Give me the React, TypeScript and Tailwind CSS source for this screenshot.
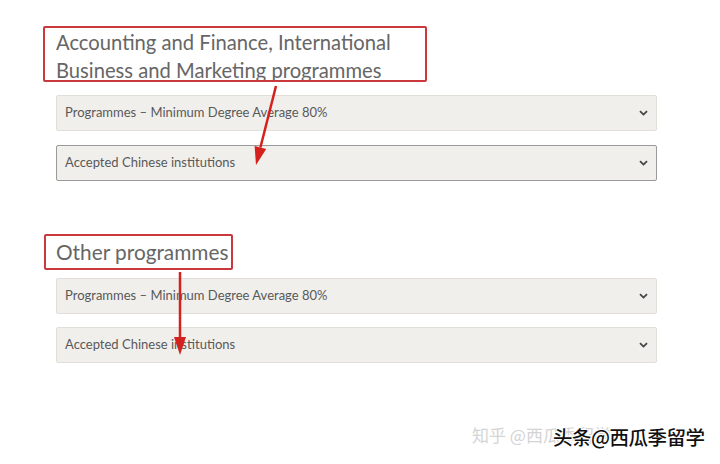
import React from "react";

type Section = {
  title: string[];
  arrow: { x1: number; y1: number; x2: number; y2: number };
  rows: { label: string; active?: boolean }[];
};

const sections: Section[] = [
  {
    title: ["Accounting and Finance, International", "Business and Marketing programmes"],
    arrow: { x1: 276, y1: 86, x2: 256, y2: 165 },
    rows: [
      { label: "Programmes – Minimum Degree Average 80%" },
      { label: "Accepted Chinese institutions", active: true },
    ],
  },
  {
    title: ["Other programmes"],
    arrow: { x1: 180, y1: 272, x2: 180, y2: 355 },
    rows: [
      { label: "Programmes – Minimum Degree Average 80%" },
      { label: "Accepted Chinese institutions" },
    ],
  },
];

function Chevron() {
  return (
    <svg width="9" height="6" viewBox="0 0 9 6" className="shrink-0">
      <path d="M1 1.2 L4.5 4.6 L8 1.2" fill="none" stroke="#444" strokeWidth="1.8" />
    </svg>
  );
}

function Row({ label, active }: { label: string; active?: boolean }) {
  return (
    <div
      className={
        "flex h-[36px] items-center justify-between rounded-[2px] bg-[#f1efec] pl-[8px] pr-[8px] text-[13px] text-[#595959] " +
        (active ? "border border-[#9a9a9a]" : "border border-[#e2dfdb]")
      }
    >
      <span>{label}</span>
      <Chevron />
    </div>
  );
}

export default function App() {
  return (
    <div
      className="relative h-[464px] w-[720px] overflow-hidden bg-white"
      style={{ fontFamily: "Lato, 'Open Sans', sans-serif" }}
    >
      <div className="flex w-[657px] flex-col pl-[56px] pt-[28px]">
        {/* first group */}
        <div className="relative">
          <h2 className="text-[20.2px] leading-[28px] font-normal text-[#666]">
            {sections[0].title.map((t) => (
              <div key={t}>{t}</div>
            ))}
          </h2>
          <div className="pointer-events-none absolute left-[-13px] top-[-2px] h-[56px] w-[384px] rounded-[2px] border-2 border-[#c9383a]" />
        </div>
        <div className="mt-[11px] flex flex-col gap-[14px]">
          {sections[0].rows.map((r) => (
            <Row key={r.label} {...r} />
          ))}
        </div>

        {/* second group */}
        <div className="relative mt-[53px] self-start">
          <h2 className="text-[20.8px] leading-[36px] font-normal text-[#666]">{sections[1].title[0]}</h2>
          <div className="pointer-events-none absolute left-[-12px] right-[-5px] top-0 h-[36px] rounded-[2px] border-2 border-[#c9383a]" />
        </div>
        <div className="mt-[8px] flex flex-col gap-[13px]">
          {sections[1].rows.map((r) => (
            <Row key={r.label + "2"} {...r} />
          ))}
        </div>
      </div>

      {/* annotation arrows */}
      <svg className="pointer-events-none absolute left-0 top-0" width="720" height="464">
        {sections.map((s, i) => {
          const { x1, y1, x2, y2 } = s.arrow;
          const dx = x2 - x1;
          const dy = y2 - y1;
          const len = Math.hypot(dx, dy);
          const ux = dx / len;
          const uy = dy / len;
          const hx = x2 - ux * 18;
          const hy = y2 - uy * 18;
          return (
            <g key={i}>
              <line x1={x1} y1={y1} x2={hx} y2={hy} stroke="#d4211d" strokeWidth="2.5" />
              <polygon
                points={`${x2},${y2} ${hx - uy * 6},${hy + ux * 6} ${hx + uy * 6},${hy - ux * 6}`}
                fill="#d4211d"
              />
            </g>
          );
        })}
      </svg>

      {/* watermarks */}
      <div
        className="absolute left-[472px] top-[422px] text-[17px] text-[#d4d4d4]"
        style={{ fontFamily: "'Noto Sans CJK SC', sans-serif" }}
      >
        知乎 @西瓜季留学
      </div>
      <div
        className="absolute left-[553px] top-[422px] text-[19.5px] font-medium tracking-[-0.5px] text-[#111]"
        style={{
          fontFamily: "'Noto Sans CJK SC', sans-serif",
          textShadow: "1px 1px 0 #fff, -1px -1px 0 #fff, 1px -1px 0 #fff, -1px 1px 0 #fff",
        }}
      >
        头条@西瓜季留学
      </div>
    </div>
  );
}
